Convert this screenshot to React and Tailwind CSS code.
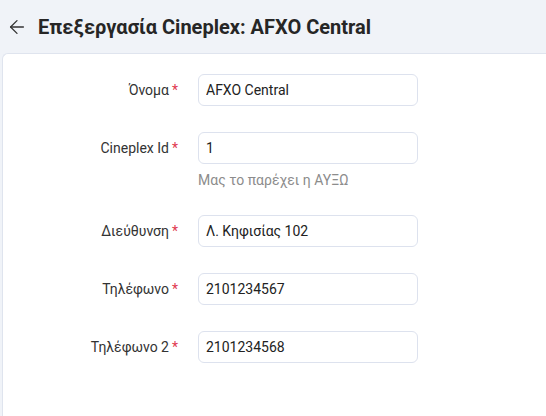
import {ArrowLeft} from "lucide-react"

const fields = [
  { label: "Όνομα", value: "AFXO Central" },
  { label: "Cineplex Id", value: "1", hint: "Μας το παρέχει η ΑΥΞΩ" },
  { label: "Διεύθυνση", value: "Λ. Κηφισίας 102" },
  { label: "Τηλέφωνο", value: "2101234567" },
  { label: "Τηλέφωνο 2", value: "2101234568" },
]

export default function App() {
  return (
    <div className="h-[416px] w-[546px] overflow-hidden bg-[#f0f3f8] font-['Roboto',sans-serif]">
      <div className="flex h-[53px] items-center pl-[6px]">
        <ArrowLeft size={22} strokeWidth={1.4} className="text-[#333]" />
        <h1 className="ml-[10px] text-[20px] font-bold text-[#262626]">Επεξεργασία Cineplex: AFXO Central</h1>
      </div>
      <div className="ml-[2px] h-[400px] rounded-tl-[6px] border-l border-t border-[#dfe4ee] bg-white pt-[20px]">
        <div className="flex flex-col gap-[26px]">
          {fields.map((f) => (
            <div key={f.label} className="flex items-start">
              <label className="flex h-[32px] w-[175px] items-center justify-end text-[14px] text-[#333]">
                {f.label}
                <span className="ml-[3px] text-[#e0394f]">*</span>
              </label>
              <div className="ml-[20px] w-[220px]">
                <input
                  readOnly
                  value={f.value}
                  className="h-[32px] w-full rounded-[6px] border border-[#dde2ee] px-[7px] text-[14px] text-[#222] outline-none"
                />
                {f.hint && (
                  <p className="mt-[8px] text-[14px] leading-[17px] text-[#8c8c8c]">{f.hint}</p>
                )}
              </div>
            </div>
          ))}
        </div>
      </div>
    </div>
  )
}
